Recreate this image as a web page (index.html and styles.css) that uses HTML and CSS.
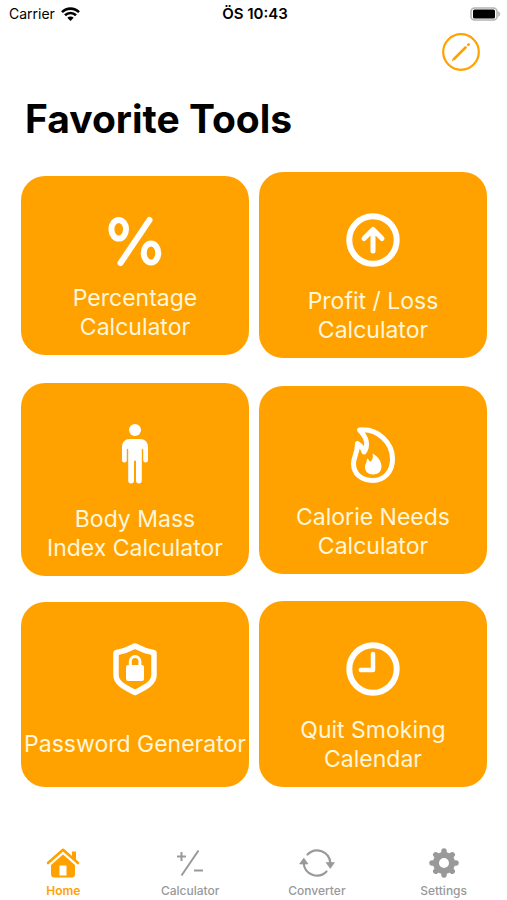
FILE: index.html
```
<!DOCTYPE html>
<html lang="en">
<head>
    <meta charset="UTF-8">
    <meta name="viewport" content="width=device-width, initial-scale=1.0">
    <title>Favorite Tools</title>
    <link rel="stylesheet" href="styles.css">
</head>
<body>
    <!-- Status bar -->
    <div class="status-bar">
        <div class="carrier">
            <span>Carrier</span>
            <svg width="19" height="14" viewBox="0 0 19 14" fill="none" stroke="#000" stroke-width="2.6">
                <path d="M1 5.2C5.8.4 13.2.4 18 5.2"/>
                <path d="M4 8.3c3.1-3 7.9-3 11 0"/>
                <path d="M9.5 14L6.3 10.8c1.8-1.7 4.6-1.7 6.4 0z" fill="#000" stroke="none"/>
            </svg>
        </div>
        <span class="time">ÖS 10:43</span>
        <div class="battery">
            <svg width="31" height="14" viewBox="0 0 31 14">
                <rect x="1" y="1" width="26" height="12" rx="3.5" fill="#fff" stroke="#b4b4b4" stroke-width="1.6"/>
                <rect x="3" y="2.5" width="22" height="9" rx="1.5" fill="#000"/>
                <path d="M28.5 4.5q3 2.500 0 5z" fill="#b4b4b4" stroke="#b4b4b4" stroke-width=".6"/>
            </svg>
        </div>
    </div>

    <header class="header">
        <button class="edit-btn" aria-label="Edit">
            <svg width="38" height="38" viewBox="0 0 38 38" fill="none" stroke="currentColor" stroke-linecap="round">
                <circle cx="19" cy="19" r="17.8" stroke-width="2.2"/>
                <path d="M12 26L23.500 14.500" stroke-width="2.6"/>
                <path d="M10.500 27.500l1-1.500" stroke-width="1.2"/>
                <path d="M26.200 11.800l.5-.5" stroke-width="2.6"/>
            </svg>
        </button>
        <h1>Favorite Tools</h1>
    </header>

    <!-- Tool cards -->
    <main class="tools">
        <button class="card">
            <svg width="54" height="47" viewBox="0 0 54 47" fill="none" stroke="#fff" stroke-width="6">
                <ellipse cx="10.7" cy="12.3" rx="7.3" ry="9.3"/>
                <ellipse cx="43" cy="36" rx="7.3" ry="9.5"/>
                <path d="M41.5 3L12.500 46" stroke-linecap="round"/>
            </svg>
            <span class="label">Percentage<br>Calculator</span>
        </button>
        <button class="card">
            <svg width="54" height="54" viewBox="0 0 54 54" fill="none" stroke="#fff" stroke-linecap="round" stroke-linejoin="round">
                <circle cx="27" cy="27" r="23.7" stroke-width="6"/>
                <path d="M27 38V17M18 25.5l9-9 9 9" stroke-width="5"/>
            </svg>
            <span class="label">Profit / Loss<br>Calculator</span>
        </button>
        <button class="card">
            <svg width="26" height="61" viewBox="0 0 26 61" fill="#fff">
                <circle cx="13" cy="6" r="6"/>
                <path d="M8 15h10c5 0 8 3 8 8v13.2a2.4 2.4 0 0 1-4.8 0V25.5q0-.8-.7-.8t-.7.8V56.5a2.9 2.9 0 0 1-5.8 0V37.5q0-1-1-1t-1 1v19a2.9 2.9 0 0 1-5.8 0V25.500q0-.8-.7-.8t-.7.8v10.700a2.4 2.4 0 0 1-4.8 0V23c0-5 3-8 8-8z"/>
            </svg>
            <span class="label">Body Mass<br>Index Calculator</span>
        </button>
        <button class="card">
            <svg width="44" height="56" viewBox="0 0 44 56">
                <path d="M8.5 3C27 1 41.5 16 41.5 32 41.5 45 33 53.5 22 53.5 10 53.5 2.5 46.5 2.5 36.5 2.5 30 6.5 27 6.5 16.5c3 2 5.500 4.500 6.500 8.500C17.500 18.500 16 10.500 8.500 3z" fill="none" stroke="#fff" stroke-width="5" stroke-linejoin="round"/>
                <path d="M21.5 26.5C27 29.5 30.5 34.5 30.5 39.5c0 5-3.5 8-8.5 8s-8-3-8-7.5c0-3 2-4.5 2-8.5 1.5.8 2.5 2 3 3.500 2.500-2 3.500-4.500 2.500-8.500z" fill="#fff"/>
            </svg>
            <span class="label">Calorie Needs<br>Calculator</span>
        </button>
        <button class="card">
            <svg width="44" height="53" viewBox="0 0 44 53">
                <path d="M22 3C28.5 6.5 34 8.5 41 9.8V32C41 39.5 34 43.5 22 49.500 10 43.500 3 39.500 3 32V9.800C10 8.500 15.500 6.500 22 3z" fill="none" stroke="#fff" stroke-width="5.5" stroke-linejoin="round"/>
                <rect x="13" y="22" width="18" height="16" rx="2" fill="#fff"/>
                <path d="M17.300 23v-4.500a4.800 5 0 0 1 9.600 0V23" fill="none" stroke="#fff" stroke-width="3"/>
            </svg>
            <span class="label">Password Generator</span>
        </button>
        <button class="card">
            <svg width="54" height="54" viewBox="0 0 54 54" fill="none" stroke="#fff" stroke-linecap="round" stroke-linejoin="round">
                <circle cx="27" cy="27" r="23.7" stroke-width="6"/>
                <path d="M27 12v16H14.8" stroke-width="4.5"/>
            </svg>
            <span class="label">Quit Smoking<br>Calendar</span>
        </button>
    </main>

    <!-- Bottom tabs -->
    <nav class="tab-bar">
        <a href="#home" class="tab active">
            <svg width="34" height="32" viewBox="0 0 34 32">
                <path d="M26 4.5h4v9l-4-3.5z" fill="currentColor"/>
                <path d="M2 16L17 2.8 32 16" fill="none" stroke="currentColor" stroke-width="2.6" stroke-linecap="round" stroke-linejoin="round"/>
                <path fill-rule="evenodd" d="M17 7.5l12 10.5v9q0 3.5-3.5 3.5h-17Q5 30.500 5 27v-9zM13.500 18.500v10h7v-10z" fill="currentColor"/>
            </svg>
            <span>Home</span>
        </a>
        <a href="#calculator" class="tab">
            <svg width="34" height="32" viewBox="0 0 34 32" fill="none" stroke="currentColor" stroke-width="2">
                <path d="M8.5 5v9M4 9.5h9M25.5 3.5L8.5 28.5M21 23.5h9"/>
            </svg>
            <span>Calculator</span>
        </a>
        <a href="#converter" class="tab">
            <svg width="34" height="32" viewBox="0 0 34 32">
                <path d="M7.5 7.500A13.300 13.300 0 0 1 30.300 16M26.500 24.500A13.300 13.300 0 0 1 3.700 16" fill="none" stroke="currentColor" stroke-width="2.2" stroke-linecap="round"/>
                <path d="M26 15.500h8.500l-4.200 6zM-.5 17h8.500L3.800 11z" fill="currentColor" stroke="currentColor" stroke-linejoin="round" stroke-width=".6"/>
            </svg>
            <span>Converter</span>
        </a>
        <a href="#settings" class="tab">
            <svg width="34" height="32" viewBox="0 0 34 32" fill="none" stroke="currentColor">
                <circle cx="17" cy="16" r="8" stroke-width="6"/>
                <path d="M17 6V4M17 26v2M7 16H5M27 16h2M10 9L8.8 7.8M24 9l1.2-1.2M10 23l-1.2 1.2M24 23l1.2 1.2" stroke-width="5.5" stroke-linecap="round"/>
            </svg>
            <span>Settings</span>
        </a>
    </nav>
</body>
</html>
```

FILE: styles.css
```
* {
    margin: 0;
    padding: 0;
    box-sizing: border-box;
}

body {
    min-height: 100vh;
    display: flex;
    flex-direction: column;
    background: #fff;
    color: #000;
    font-family: Inter, "Liberation Sans", sans-serif;
}

svg {
    display: block;
    overflow: visible;
    flex-shrink: 0;
}

button {
    border: none;
    font-family: inherit;
    cursor: pointer;
}

/* Status bar */
.status-bar {
    display: grid;
    grid-template-columns: 1fr auto 1fr;
    align-items: center;
    height: 27px;
    padding: 0 6px 0 9px;
    font-size: 14px;
}

.carrier {
    display: flex;
    align-items: center;
    gap: 6px;
}

.time {
    font-size: 15px;
    line-height: 17px;
    font-weight: 600;
}

.battery {
    justify-self: end;
}

/* Header */
.header {
    display: flex;
    flex-direction: column;
    padding: 6px 27px 0 25px;
}

.edit-btn {
    align-self: flex-end;
    background: none;
    color: #ffa200;
}

h1 {
    margin-top: 23px;
    font-size: 39px;
    line-height: 50px;
    font-weight: 700;
}

/* Tool cards */
.tools {
    display: grid;
    grid-template-columns: 1fr 1fr;
    align-items: center;
    gap: 25px 10px;
    padding: 28px 20px 28px 21px;
}

.card {
    display: flex;
    flex-direction: column;
    align-items: center;
    gap: 20px;
    padding: 41px 0 13px;
    border-radius: 24px;
    background: #ffa200;
    color: #fff6dc;
}

.label {
    display: flex;
    align-items: center;
    min-height: 58px;
    font-size: 23px;
    line-height: 29px;
    font-weight: 400;
    white-space: nowrap;
}

/* Bottom tabs */
.tab-bar {
    display: grid;
    grid-template-columns: repeat(4, 1fr);
    margin-top: auto;
    padding-bottom: 1px;
}

.tab {
    display: flex;
    flex-direction: column;
    align-items: center;
    gap: 4px;
    color: #999;
    font-size: 12px;
    line-height: 16px;
    font-weight: 500;
    text-decoration: none;
}

.tab.active {
    color: #ffa200;
    font-weight: 600;
}
```
